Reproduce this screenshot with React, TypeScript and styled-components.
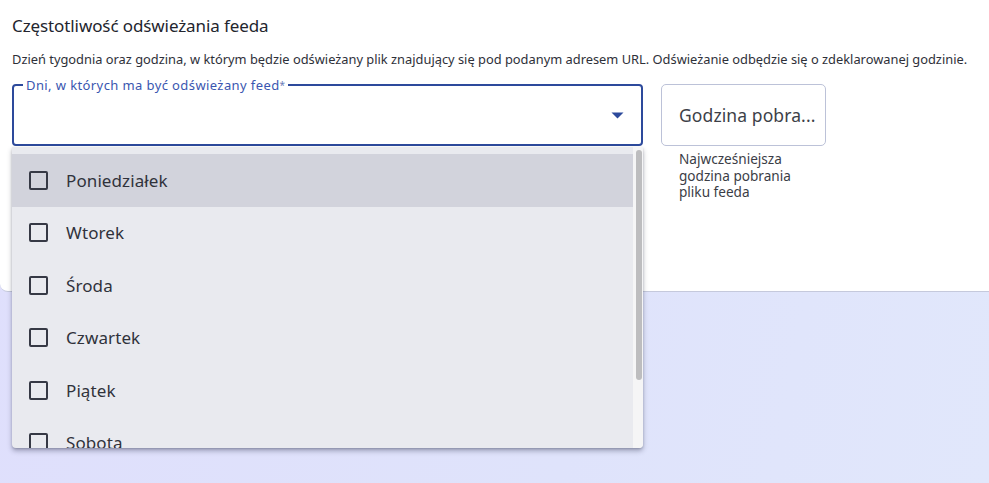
import React from "react";
import styled, { createGlobalStyle } from "styled-components";

const Global = createGlobalStyle`
  html, body { margin: 0; padding: 0; }
  body {
    width: 989px;
    height: 483px;
    overflow: hidden;
    background: linear-gradient(100deg, #dfdffc 0%, #dfe3fb 60%, #e1e7fb 100%);
    font-family: "Noto Sans", "Open Sans", sans-serif;
    color: #2b2d36;
  }
`;

const Page = styled.div`
  position: relative;
  width: 989px;
  height: 483px;
`;

const Card = styled.section`
  box-sizing: border-box;
  height: 292px;
  background: #ffffff;
  border-bottom: 1px solid #c5c9dc;
  border-bottom-left-radius: 8px;
  padding: 14px 12px 0 12px;
`;

const Title = styled.h2`
  margin: 0;
  font-size: 17px;
  font-weight: 400;
  line-height: 24px;
  color: #23252e;
  letter-spacing: -0.1px;
`;

const Description = styled.p`
  margin: 12px 0 0 0;
  font-size: 12.85px;
  line-height: 18px;
  color: #2e3039;
  white-space: nowrap;
`;

const FieldRow = styled.div`
  display: flex;
  gap: 18px;
  margin-top: 16px;
  align-items: flex-start;
`;

const SelectBox = styled.div`
  position: relative;
  box-sizing: border-box;
  width: 631px;
  height: 62px;
  padding: 0 16px 0 12px;
  border: 2px solid #2d4a9c;
  border-radius: 4px;
  display: flex;
  align-items: center;
  justify-content: flex-end;
`;

const Label = styled.span`
  position: absolute;
  left: 9px;
  top: -9px;
  padding: 0 3px;
  background: #ffffff;
  font-size: 13px;
  line-height: 16px;
  color: #3a56b0;
  letter-spacing: 0.4px;
  white-space: nowrap;
`;

const Star = styled.span`
  font-size: 10px;
  vertical-align: top;
  color: #6b7db8;
`;

const Caret = styled.svg`
  width: 13px;
  height: 7px;
  margin-right: 1px;
`;

const TimeColumn = styled.div`
  display: flex;
  flex-direction: column;
`;

const TimeField = styled.div`
  box-sizing: border-box;
  width: 165px;
  height: 62px;
  border: 1px solid #bcc2d8;
  border-radius: 5px;
  display: flex;
  align-items: center;
  padding: 0 17px;
  font-size: 17.5px;
  color: #3d3f48;
  letter-spacing: 0.1px;
  white-space: nowrap;
`;

const Helper = styled.div`
  margin-top: 5px;
  padding-left: 18px;
  width: 140px;
  font-size: 13.6px;
  line-height: 16.5px;
  color: #3b3d46;
`;

const Menu = styled.div`
  position: absolute;
  left: 12px;
  top: 147px;
  width: 631px;
  height: 301px;
  display: flex;
  background: #e9eaef;
  border-radius: 0 0 4px 4px;
  box-shadow: 0 3px 5px rgba(40, 44, 70, 0.35), 0 1px 2px rgba(40, 44, 70, 0.2);
  overflow: hidden;
`;

const List = styled.ul`
  flex: 1;
  list-style: none;
  margin: 0;
  padding: 7px 0 0 0;
  overflow: hidden;
`;

const Item = styled.li<{ $active?: boolean }>`
  height: 52.5px;
  display: flex;
  align-items: center;
  gap: 18px;
  padding-left: 17px;
  background: ${(p) => (p.$active ? "#d2d3dc" : "transparent")};
  font-size: 17px;
  color: #30323b;
  letter-spacing: 0.1px;
`;

const Check = styled.span`
  box-sizing: border-box;
  width: 19px;
  height: 19px;
  border: 2px solid #363945;
  border-radius: 2px;
  flex: none;
`;

const Track = styled.div`
  width: 10px;
  background: #f5f5f6;
  padding: 3px 1px 0 3px;
  box-sizing: border-box;
`;

const Thumb = styled.div`
  width: 6px;
  height: 230px;
  border-radius: 3px;
  background: #bdbdbf;
`;

const days = ["Poniedziałek", "Wtorek", "Środa", "Czwartek", "Piątek", "Sobota"];

export default function App() {
  return (
    <Page>
      <Global />
      <Card>
        <Title>Częstotliwość odświeżania feeda</Title>
        <Description>
          Dzień tygodnia oraz godzina, w którym będzie odświeżany plik znajdujący się pod podanym adresem URL. Odświeżanie odbędzie się o zdeklarowanej godzinie.
        </Description>
        <FieldRow>
          <SelectBox>
            <Label>
              Dni, w których ma być odświeżany feed<Star>*</Star>
            </Label>
            <Caret viewBox="0 0 13 7">
              <path d="M0.5 0.5 L12.5 0.5 L6.5 6.5 Z" fill="#2d4a9c" />
            </Caret>
          </SelectBox>
          <TimeColumn>
            <TimeField>Godzina pobra...</TimeField>
            <Helper>Najwcześniejsza godzina pobrania pliku feeda</Helper>
          </TimeColumn>
        </FieldRow>
      </Card>
      <Menu>
        <List>
          {days.map((d, i) => (
            <Item key={d} $active={i === 0}>
              <Check />
              {d}
            </Item>
          ))}
        </List>
        <Track>
          <Thumb />
        </Track>
      </Menu>
    </Page>
  );
}
